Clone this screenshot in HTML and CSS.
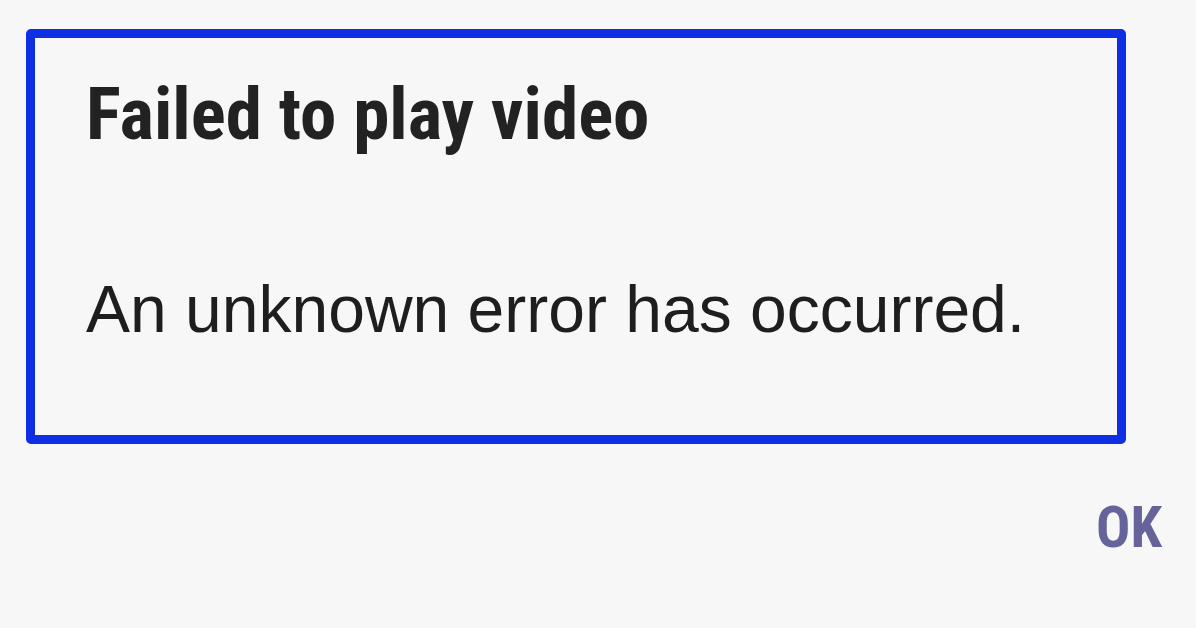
FILE: index.html
```html
<!DOCTYPE html>
<html lang="en">
<head>
<meta charset="utf-8">
<title>Failed to play video</title>
<link rel="stylesheet" href="styles.css">
</head>
<body>
  <div class="dialog">
    <div class="highlight">
      <h1 class="title">Failed to play video</h1>
      <p class="message">An unknown error has occurred.</p>
    </div>
    <div class="actions">
      <button class="ok">OK</button>
    </div>
  </div>
</body>
</html>
```

FILE: styles.css
```css
html, body {
  margin: 0;
  padding: 0;
  background: #f7f7f7;
}

.dialog {
  width: 1196px;
  height: 628px;
  box-sizing: border-box;
  padding: 29px 34px 0 26px;
  display: flex;
  flex-direction: column;
}

.highlight {
  width: 1100px;
  height: 415px;
  box-sizing: border-box;
  border: 9px solid #0f2fe4;
  border-radius: 5px;
  padding: 40px 0 0 51px;
  display: flex;
  flex-direction: column;
}

.title {
  margin: 0;
  font-family: Roboto, "Liberation Sans", sans-serif;
  font-weight: 700;
  font-stretch: 75%;
  font-size: 73px;
  line-height: 1;
  color: #222222;
}

.message {
  margin: 125px 0 0 0;
  font-family: "Liberation Sans", Arial, sans-serif;
  font-size: 66px;
  line-height: 1;
  color: #1e1e1e;
}

.actions {
  display: flex;
  justify-content: flex-end;
  margin-top: 55px;
}

.ok {
  border: 0;
  background: none;
  padding: 0;
  font-family: Roboto, "Liberation Sans", sans-serif;
  font-weight: 700;
  font-stretch: 82%;
  font-size: 57px;
  line-height: 1;
  color: #66639a;
}
```
